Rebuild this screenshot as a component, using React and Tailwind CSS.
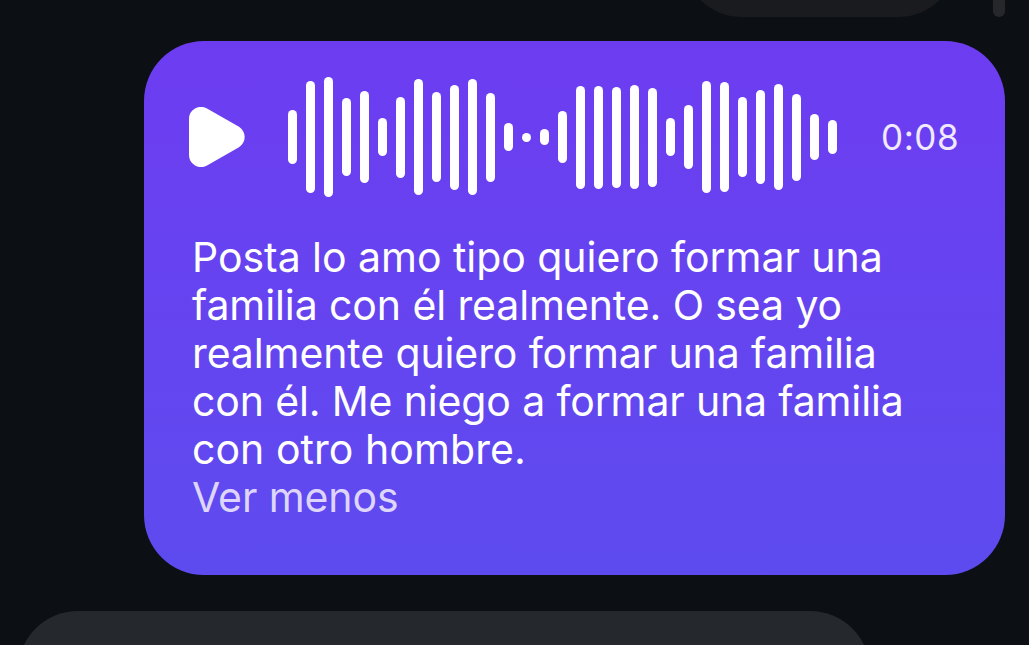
import React from 'react';

const waveform = [
    54, 112, 120, 78, 92, 38, 81, 116, 90, 105, 116, 89, 28, 9, 16, 52,
    103, 103, 101, 104, 99, 38, 64, 112, 110, 80, 94, 106, 87, 46, 34,
];

const transcript = [
    { text: 'Posta lo amo tipo quiero formar una', className: 'tracking-[-0.04px]' },
    { text: 'familia con él realmente. O sea yo', className: 'tracking-[-0.1px]' },
    { text: 'realmente quiero formar una familia', className: 'tracking-[-0.11px]' },
    { text: 'con él. Me niego a formar una familia', className: 'tracking-[-0.15px]' },
    { text: 'con otro hombre.', className: 'tracking-[0.05px]' },
];

const PlayIcon = () => (
    <svg width="56" height="60" viewBox="0 0 56 60" fill="currentColor" className="shrink-0">
        <path d="M0 12A12 12 0 0 1 18 1.6L50 19.8A12 12 0 0 1 50 40.2L18 58.4A12 12 0 0 1 0 48Z" />
    </svg>
);

const Waveform = () => (
    <div className="ml-[43px] flex h-[120px] items-center gap-[9px]">
        {waveform.map((height, i) => (
            <span key={i} className="w-[9px] shrink-0 rounded-full bg-white" style={{ height }}></span>
        ))}
    </div>
);

const VoiceMessage = () => (
    <div className="mt-6 mr-6 h-[534px] w-[861px] shrink-0 self-end rounded-[60px] bg-gradient-to-b from-[#6d3cf1] to-[#5d4bef] pt-9 text-white">
        {/* Player */}
        <div className="flex items-center pl-[45px]">
            <PlayIcon />
            <Waveform />
            <span className="ml-11 text-[35px] leading-none tracking-[0.6px] whitespace-nowrap text-[#f1eaff]">0:08</span>
        </div>

        {/* Transcript */}
        <div className="mt-9 pl-12 text-[41px] leading-[48px] whitespace-nowrap">
            {transcript.map((line) => (
                <p key={line.text}><span className={line.className}>{line.text}</span></p>
            ))}
            <button className="block tracking-[-0.1px] text-[#ddd5fc]">Ver menos</button>
        </div>
    </div>
);

const App = () => {
    return (
        <div className="flex h-[645px] w-[1029px] flex-col overflow-hidden bg-[#0c0f14] font-['Inter',sans-serif]">
            {/* Quoted message above */}
            <div className="flex h-[17px] shrink-0 items-end justify-end gap-[35px] pr-6">
                <div className="h-[120px] w-[276px] shrink-0 rounded-[60px] bg-[#191b1f]"></div>
                <div className="h-[120px] w-3 shrink-0 rounded-full bg-[#25272b]"></div>
            </div>

            <VoiceMessage />

            {/* Next incoming message */}
            <div className="mt-9 ml-[18px] h-[120px] w-[852px] shrink-0 rounded-[60px] bg-[#25282c]"></div>
        </div>
    );
};

export default App;
